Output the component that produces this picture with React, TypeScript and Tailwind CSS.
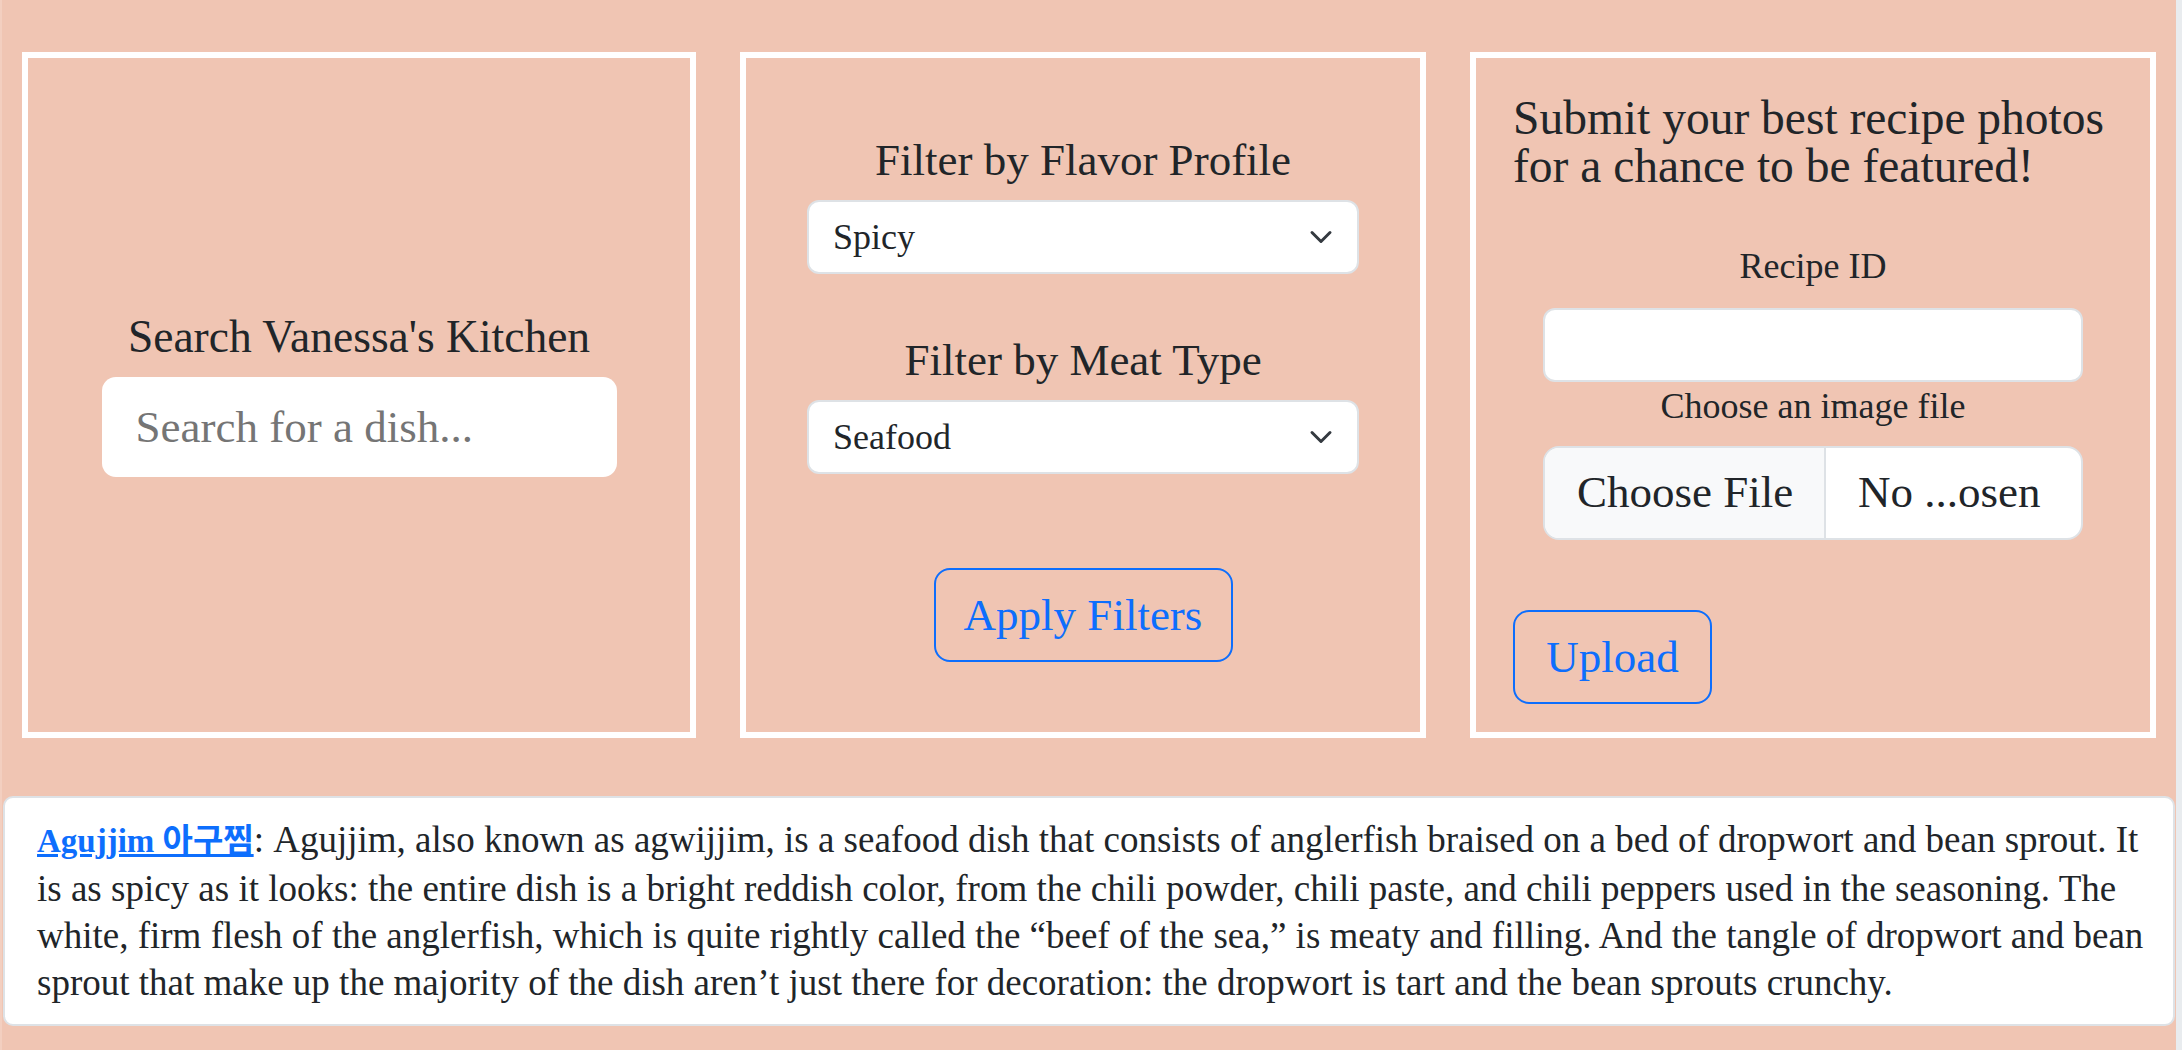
import React from 'react';

const serif = { fontFamily: '"Liberation Serif", "Noto Sans CJK KR", serif' };

function Chevron() {
  return (
    <svg
      className="pointer-events-none absolute right-[26px] top-1/2 -translate-y-1/2"
      width="24"
      height="24"
      viewBox="0 0 16 16"
      fill="none"
    >
      <path d="m2 5 6 6 6-6" stroke="#343a40" strokeWidth="2" strokeLinecap="round" strokeLinejoin="round" />
    </svg>
  );
}

function SelectBox({ value, options }: { value: string; options: string[] }) {
  return (
    <div className="relative w-[552px]">
      <select
        defaultValue={value}
        className="h-[74px] w-full appearance-none rounded-[12px] border-2 border-[#dee2e6] bg-white pl-[24px] pr-[80px] text-[36px] leading-[48px] text-[#212529] outline-none"
        style={serif}
      >
        {options.map((o) => (
          <option key={o}>{o}</option>
        ))}
      </select>
      <Chevron />
    </div>
  );
}

export default function App() {
  return (
    <div className="flex h-[1050px] w-[2182px] overflow-hidden bg-[#e9ecef] text-[#212529]" style={serif}>
      <div className="w-[2px] shrink-0 bg-[#f3cfc0]" />
      <div className="w-[2174px] shrink-0 bg-[#f0c5b3]">
        {/* cards row */}
        <div className="flex gap-[44px] pl-[20px] pt-[52px]">
          {/* search */}
          <div className="flex h-[686px] w-[674px] flex-col items-center justify-center border-[6px] border-white">
            <h5 className="mb-[16px] text-[45.5px] font-normal leading-[48px]">Search Vanessa's Kitchen</h5>
            <input
              type="text"
              placeholder="Search for a dish..."
              className="h-[100px] w-[515px] rounded-[14px] border-0 bg-white px-[34px] text-[45px] text-[#212529] outline-none placeholder:text-[#757575]"
              style={serif}
            />
          </div>

          {/* filters */}
          <div className="flex h-[686px] w-[686px] flex-col items-center justify-center border-[6px] border-white pt-[8px]">
            <h5 className="mb-[16px] text-[45px] font-normal leading-[48px]">Filter by Flavor Profile</h5>
            <SelectBox value="Spicy" options={['Spicy', 'Sweet', 'Savory', 'Sour']} />
            <h5 className="mb-[16px] mt-[62px] text-[45px] font-normal leading-[48px]">Filter by Meat Type</h5>
            <SelectBox value="Seafood" options={['Seafood', 'Beef', 'Pork', 'Chicken']} />
            <button
              className="mt-[94px] h-[94px] w-[299px] rounded-[16px] border-2 border-[#0d6efd] text-[45px] leading-[48px] text-[#0d6efd]"
              style={serif}
            >
              Apply Filters
            </button>
          </div>

          {/* upload */}
          <div className="flex h-[686px] w-[686px] flex-col justify-center border-[6px] border-white px-[37px] pt-[7px]">
            <h5 className="text-[47.5px] font-normal leading-[48px]">
              Submit your best recipe photos
              <br />
              for a chance to be featured!
            </h5>
            <label className="mb-[18px] mt-[52px] text-center text-[36px] leading-[48px]">Recipe ID</label>
            <input
              type="text"
              className="mx-auto h-[74px] w-[540px] rounded-[12px] border-2 border-[#dee2e6] bg-white outline-none"
            />
            <label className="mb-[16px] text-center text-[36px] leading-[48px]">Choose an image file</label>
            <div className="mx-auto flex h-[94px] w-[540px] overflow-hidden rounded-[16px] border-2 border-[#dee2e6] bg-white text-[45px]">
              <span className="flex w-[281px] items-center border-r-2 border-[#dee2e6] bg-[#f8f9fa] pl-[32px]">
                Choose File
              </span>
              <span className="flex items-center pl-[32px]">No ...osen</span>
            </div>
            <button
              className="mt-[70px] h-[94px] w-[199px] self-start rounded-[16px] border-2 border-[#0d6efd] text-[45px] leading-[48px] text-[#0d6efd]"
              style={serif}
            >
              Upload
            </button>
          </div>
        </div>

        {/* description */}
        <div className="ml-[1px] mt-[58px] w-[2172px] rounded-[10px] border-2 border-[#dee2e6] bg-white py-[18px] pl-[32px] pr-[20px]">
          <p className="text-[37px] leading-[47px]">
            <a href="#" className="text-[33px] font-bold text-[#0d6efd] underline">
              Agujjim 아구찜
            </a>
            : Agujjim, also known as agwijjim, is a seafood dish that consists of anglerfish braised on a bed of
            dropwort and bean sprout. It is as spicy as it looks: the entire dish is a bright reddish color, from
            the chili powder, chili paste, and chili peppers used in the seasoning. The white, firm flesh of the
            anglerfish, which is quite rightly called the “beef of the sea,” is meaty and filling. And the tangle
            of dropwort and bean sprout that make up the majority of the dish aren’t just there for decoration:
            the dropwort is tart and the bean sprouts crunchy.
          </p>
        </div>

        <div className="ml-[20px] mt-[25px] h-[200px] w-[2134px] rounded-[10px] bg-white" />
      </div>
      <div className="w-[6px] shrink-0 bg-[#e9ecef]" />
    </div>
  );
}
